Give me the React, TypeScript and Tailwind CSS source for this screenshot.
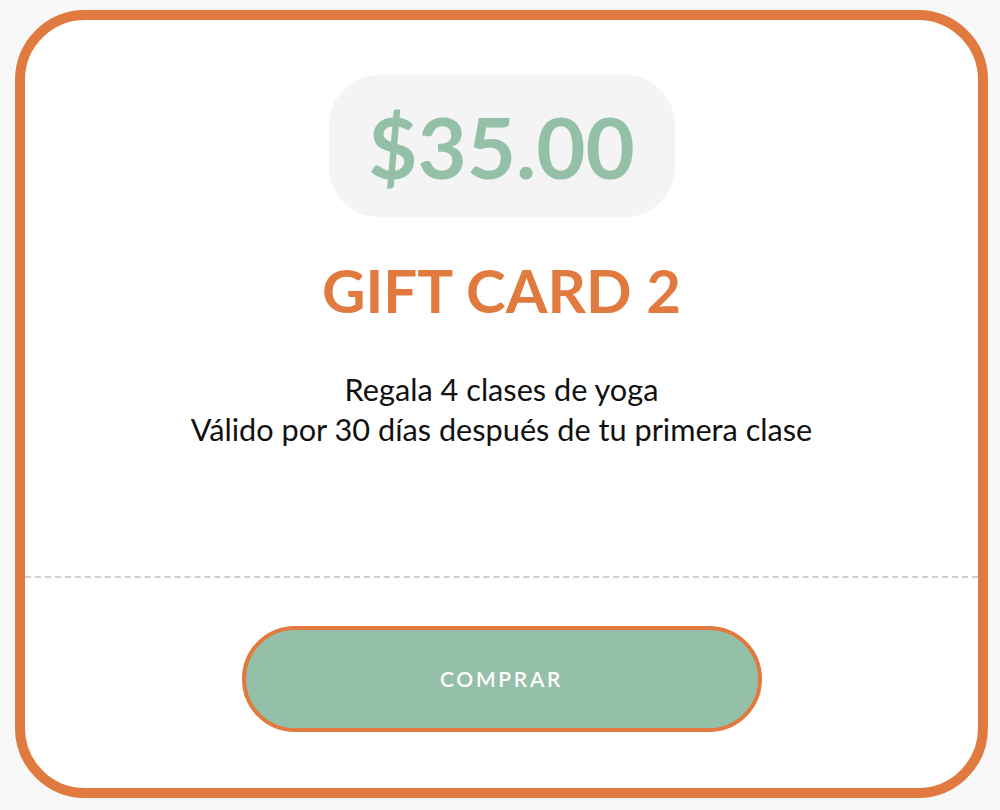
import React from "react";

const GiftCard: React.FC = () => {
  return (
    <div className="ml-[15px] mt-[10px] w-[973px] h-[788px] rounded-[70px] border-[10px] border-[#e07a3f] bg-white flex flex-col">
      {/* Top section */}
      <div className="h-[556px] flex flex-col items-center">
        <div className="mt-[55px] w-[346px] h-[142px] rounded-[50px] bg-[#f4f4f4] flex items-center justify-center">
          <span className="text-[85px] leading-none font-bold text-[#93c0a6]">$35.00</span>
        </div>
        <h1 className="mt-[43px] text-[60px] leading-none font-bold text-[#e07a3f]">GIFT CARD 2</h1>
        <p className="mt-[50px] text-[30.7px] leading-[40px] text-[#111] text-center">
          Regala 4 clases de yoga
          <br />
          Válido por 30 días después de tu primera clase
        </p>
      </div>

      {/* Divider */}
      <div className="border-t-2 border-dashed border-[#cfcfcf]" />

      {/* Button */}
      <div className="flex justify-center pt-[48px]">
        <button className="w-[520px] h-[106px] rounded-full border-4 border-[#e07a3f] bg-[#94bfa8] text-white text-[21px] font-semibold tracking-[0.13em]">
          COMPRAR
        </button>
      </div>
    </div>
  );
};

export default function App() {
  return (
    <div className="w-[1000px] h-[810px] bg-[#f8f8f8] overflow-hidden" style={{ fontFamily: "Lato, 'Noto Sans', sans-serif" }}>
      <GiftCard />
    </div>
  );
}
